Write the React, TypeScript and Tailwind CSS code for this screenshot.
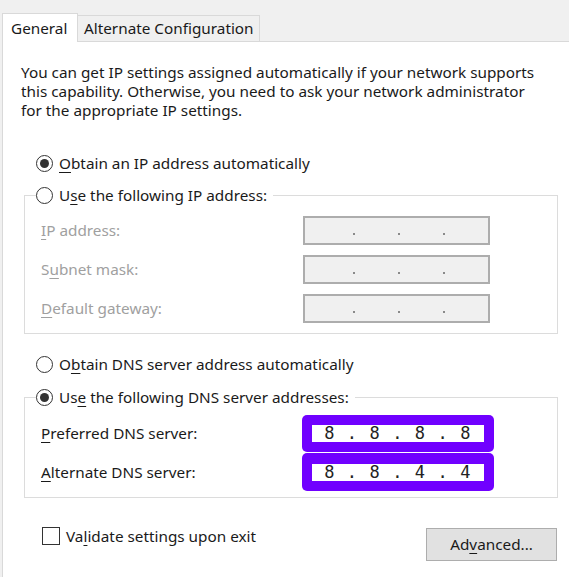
import React from "react";

const U = ({ c }: { c: string }) => <span className="underline underline-offset-[3px] decoration-1">{c}</span>;

function Radio({ checked }: { checked?: boolean }) {
  return (
    <span className="w-[17px] h-[17px] rounded-full border border-[#333] bg-white flex items-center justify-center shrink-0">
      {checked && <span className="w-[9px] h-[9px] rounded-full bg-[#333]" />}
    </span>
  );
}

function DisabledBox() {
  return (
    <div className="w-[187px] h-[29px] border-2 border-[#adadad] bg-[#f0f0f0] flex items-end pb-[8px]">
      <div className="flex w-full pl-[48px]">
        {[0, 1, 2].map((i) => (
          <span key={i} className="w-[2px] h-[2px] bg-[#8a8a8a] mr-[43px]" />
        ))}
      </div>
    </div>
  );
}

function DnsBox({ parts, h }: { parts: string[]; h: string }) {
  const chars: string[] = [];
  parts.forEach((p, i) => {
    chars.push(p);
    if (i < parts.length - 1) chars.push(".");
  });
  return (
    <div className={`w-[192px] ${h} bg-[#7000ff] rounded-[5px] flex items-center justify-center`}>
      <div className="w-[172px] h-[17px] bg-white flex items-center pl-[6px]">
        {chars.map((c, i) => (
          <span
            key={i}
            className="w-[22.67px] text-center text-[17px] leading-[17px] text-[#222]"
            style={{ fontFamily: '"DejaVu Sans Mono", monospace' }}
          >
            {c}
          </span>
        ))}
      </div>
    </div>
  );
}

export default function App() {
  return (
    <div
      className="w-[569px] h-[577px] bg-[#f0f0f0] overflow-hidden flex flex-col text-[15.3px] text-[#1a1a1a]"
      style={{ fontFamily: '"Noto Sans", "Open Sans", sans-serif' }}
    >
      {/* Tab strip */}
      <div className="h-[41px] flex items-end pl-[2px] shrink-0">
        <div className="relative z-10 -mb-px w-[76px] h-[29px] bg-white border border-b-0 border-[#d9d9d9] flex items-center pl-[8px] pt-[2px] leading-none">
          General
        </div>
        <div className="w-[182px] h-[26px] bg-[#f0f0f0] border border-l-0 border-b-0 border-[#d9d9d9] flex items-center pl-[6px] pt-[1px] leading-none">
          Alternate Configuration
        </div>
      </div>

      {/* Panel */}
      <div className="flex-1 ml-[2px] border-l border-t border-[#d9d9d9] bg-white flex flex-col">
        <p className="mt-[21px] pl-[18px] leading-[19px]">
          You can get IP settings assigned automatically if your network supports
          <br />
          this capability. Otherwise, you need to ask your network administrator
          <br />
          for the appropriate IP settings.
        </p>

        <div className="mt-[33px] ml-[33px] h-[20px] flex items-center gap-[6px]">
          <Radio checked />
          <span>
            <U c="O" />btain an IP address automatically
          </span>
        </div>

        <div className="mt-[22px] ml-[21px] w-[534px] h-[139px] border border-[#dcdcdc] flex flex-col">
          <div className="-mt-[11px] ml-[11px] w-fit h-[20px] bg-white pr-[6px] flex items-center gap-[6px]">
            <Radio />
            <span>
              U<U c="s" />e the following IP address:
            </span>
          </div>
          {[
            [<><U c="I" />P address:</>],
            [<>S<U c="u" />bnet mask:</>],
            [<><U c="D" />efault gateway:</>],
          ].map((l, i) => (
            <div key={i} className={`${i === 0 ? "mt-[11px]" : "mt-[10px]"} h-[29px] flex items-center`}>
              <span className="pl-[16px] w-[278px] text-[#a0a0a0]">{l[0]}</span>
              <DisabledBox />
            </div>
          ))}
        </div>

        <div className="mt-[20px] ml-[33px] h-[20px] flex items-center gap-[6px]">
          <Radio />
          <span>
            O<U c="b" />tain DNS server address automatically
          </span>
        </div>

        <div className="mt-[23px] ml-[21px] w-[534px] h-[101px] border border-[#dcdcdc] flex flex-col">
          <div className="-mt-[11px] ml-[11px] w-fit h-[20px] bg-white pr-[6px] flex items-center gap-[6px]">
            <Radio checked />
            <span>
              Us<U c="e" /> the following DNS server addresses:
            </span>
          </div>
          <div className="mt-[8px] h-[37px] flex items-center">
            <span className="pl-[16px] w-[277px]">
              <U c="P" />referred DNS server:
            </span>
            <DnsBox parts={["8", "8", "8", "8"]} h="h-[37px]" />
          </div>
          <div className="mt-[1px] h-[38px] flex items-center">
            <span className="pl-[16px] w-[277px]">
              <U c="A" />lternate DNS server:
            </span>
            <DnsBox parts={["8", "8", "4", "4"]} h="h-[38px]" />
          </div>
        </div>

        <div className="mt-[29px] flex items-start">
          <div className="ml-[39px] h-[18px] flex items-center gap-[6px]">
            <span className="w-[18px] h-[18px] border border-[#333] bg-white shrink-0" />
            <span>
              Va<U c="l" />idate settings upon exit
            </span>
          </div>
          <div className="ml-auto mr-[12px] mt-[1px] w-[131px] h-[33px] bg-[#e1e1e1] border border-[#adadad] flex items-center justify-center">
            Ad<U c="v" />anced...
          </div>
        </div>
      </div>
    </div>
  );
}
